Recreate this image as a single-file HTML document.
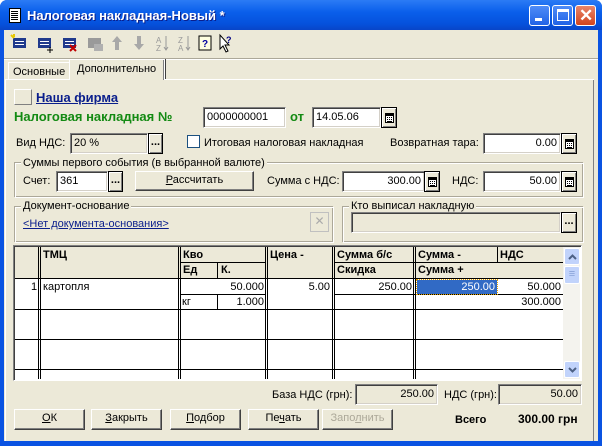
<!DOCTYPE html>
<html><head><meta charset="utf-8">
<style>
*{margin:0;padding:0;box-sizing:border-box}
body{width:602px;height:446px;overflow:hidden;background:#fff;font-family:"Liberation Sans",Tahoma,sans-serif;font-size:11px;color:#000;position:relative}
.a{position:absolute}
.win{left:0;top:0;width:602px;height:446px;background:#0A53E2;border-radius:7px 7px 0 0}
.title{left:0;top:0;width:602px;height:30px;background:linear-gradient(#2B7BF5,#0A5FEB 40%,#0551DC 80%,#0845C8);border-radius:7px 7px 0 0}
.body{left:4px;top:30px;width:594px;height:411px;background:#ECE9D8}
.t{position:absolute;white-space:nowrap;line-height:13px}
.in{position:absolute;background:#fff;border:1px solid;border-color:#808080 #fff #fff #808080;box-shadow:inset 1px 1px #404040,inset -1px -1px #D4D0C8;padding:3px 3px 0;line-height:13px;white-space:nowrap}
.r{text-align:right;padding-right:3px}
.btn{position:absolute;background:#ECE9D8;border:1px solid;border-color:#fff #404040 #404040 #fff;box-shadow:inset -1px -1px #808080;text-align:center;line-height:17px}
.sb{position:absolute;background:#ECE9D8;border:1px solid #000;box-shadow:inset 1px 1px #fff,inset -1px -1px #808080;text-align:center;font-weight:bold;line-height:10px;font-size:11px}
.sb svg{position:absolute;left:3px;top:5px}
.grp{position:absolute;border:1px solid #fff;box-shadow:-1px -1px 0 #ACA899 inset,-1px -1px 0 #ACA899}
.gl{position:absolute;background:#ECE9D8;padding:0 2px;line-height:13px;white-space:nowrap}
.vl{position:absolute;width:1px;background:#000}
.hl{position:absolute;height:1px;background:#000}
.wb{position:absolute;top:5px;width:21px;height:21px;border:1px solid #fff;border-radius:3px;background:linear-gradient(#4F8CF7,#2163E6)}
</style></head><body>
<svg width="0" height="0" style="position:absolute"><defs><symbol id="calc" viewBox="0 0 9 10"><rect x="0.5" y="0.5" width="8" height="9" fill="#fff" stroke="#000"/><rect x="1" y="1" width="7" height="2" fill="#000"/><g fill="#000"><rect x="2" y="4" width="1" height="1"/><rect x="4" y="4" width="1" height="1"/><rect x="6" y="4" width="1" height="1"/><rect x="2" y="6" width="1" height="1"/><rect x="4" y="6" width="1" height="1"/><rect x="6" y="6" width="1" height="1"/><rect x="2" y="8" width="5" height="1"/></g></symbol></defs></svg>
<div class="a win"></div>
<div class="a title"></div>
<div class="a" style="left:9px;top:8px;width:12px;height:15px;background:#fff;border:1px solid #000"></div>
<div class="a" style="left:11px;top:11px;width:7px;height:1px;background:#000;box-shadow:0 2px #000,0 4px #000,0 6px #000,0 8px #000"></div>
<div class="t" style="left:27px;top:8px;color:#fff;font-weight:bold;font-size:13px;line-height:15px;text-shadow:1px 1px #0A1E8C">Налоговая накладная-Новый *</div>
<div class="wb" style="left:529px"><div class="a" style="left:5px;top:12px;width:7px;height:3px;background:#fff"></div></div>
<div class="wb" style="left:552px"><div class="a" style="left:4px;top:3px;width:12px;height:12px;border:1px solid #fff;border-top-width:3px"></div></div>
<div class="wb" style="left:575px;background:linear-gradient(#E8856A,#D2451E)"><div class="t" style="left:3px;top:1px;color:#fff;font-size:17px;line-height:17px;font-weight:bold">✕</div></div>
<div class="a body"></div>
<svg class="a" style="left:8px;top:32px" width="230" height="22">
<g fill="#203A8C"><rect x="5" y="6" width="13" height="10"/><rect x="30" y="6" width="13" height="10"/><rect x="55" y="6" width="13" height="10"/></g>
<g fill="#fff"><rect x="7" y="9" width="9" height="1"/><rect x="7" y="12" width="9" height="1"/><rect x="32" y="9" width="9" height="1"/><rect x="32" y="12" width="9" height="1"/><rect x="57" y="9" width="9" height="1"/><rect x="57" y="12" width="9" height="1"/></g>
<path d="M3 3l3 3M6 2v3" stroke="#E8C800" stroke-width="2"/>
<path d="M42 15v6M39 18h6" stroke="#000"/>
<path d="M62 13l6 6M68 13l-6 6" stroke="#C00000" stroke-width="2"/>
<rect x="80" y="6" width="13" height="10" fill="#9A9A9A"/><rect x="86" y="12" width="9" height="7" fill="#B0B0B0"/>
<path d="M109 4l-5 6h3v8h4v-8h3z" fill="#A8A8A8"/>
<path d="M131 18l-5-6h3v-8h4v8h3z" fill="#A8A8A8"/>
<text x="148" y="11" font-size="8" fill="#999" font-family="Liberation Sans">A</text><text x="148" y="19" font-size="8" fill="#999" font-family="Liberation Sans">Z</text>
<text x="170" y="11" font-size="8" fill="#999" font-family="Liberation Sans">Z</text><text x="170" y="19" font-size="8" fill="#999" font-family="Liberation Sans">A</text>
<path d="M158 4v14M156 15l2 3 2-3M180 4v14M178 15l2 3 2-3" stroke="#999" fill="none"/>
<rect x="191" y="4" width="12" height="14" fill="#FFFFE0" stroke="#000"/><text x="194" y="15" font-size="10" font-weight="bold" fill="#0000A0" font-family="Liberation Sans">?</text>
<path d="M212 3v14l3-3 3 6 2-1-3-6h4z" fill="#fff" stroke="#000"/><text x="218" y="11" font-size="9" font-weight="bold" fill="#000080" font-family="Liberation Sans">?</text>
</svg>
<div class="hl" style="left:4px;top:58px;width:594px;background:#ACA899"></div>
<div class="hl" style="left:4px;top:59px;width:594px;background:#fff"></div>
<div class="a" style="left:8px;top:62px;width:63px;height:17px;border:1px solid #fff;border-bottom:none;box-shadow:inset -1px 0 #ACA899"></div>
<div class="t" style="left:13px;top:66px">Основные</div>
<div class="a" style="left:69px;top:59px;width:96px;height:21px;background:#ECE9D8;border:1px solid #fff;border-bottom:none;box-shadow:inset -1px 0 #808080,1px 0 #404040"></div>
<div class="t" style="left:77px;top:63px">Дополнительно</div>
<div class="a" style="left:5px;top:79px;width:589px;height:362px;border-left:1px solid #fff;border-right:1px solid #808080"></div>
<div class="hl" style="left:5px;top:79px;width:64px;background:#fff"></div>
<div class="hl" style="left:165px;top:79px;width:429px;background:#fff"></div>
<div class="a" style="left:14px;top:89px;width:18px;height:16px;border:1px solid;border-color:#fff #808080 #808080 #fff;background:#ECE9D8"></div>
<div class="t" style="left:36px;top:90px;font-size:13px;font-weight:bold;color:#0A1E8C;text-decoration:underline;line-height:15px">Наша фирма</div>
<div class="t" style="left:14px;top:109px;font-size:13px;font-weight:bold;color:#138A13;line-height:15px">Налоговая накладная №</div>
<div class="in" style="left:203px;top:107px;width:83px;height:21px">0000000001</div>
<div class="t" style="left:290px;top:109px;font-size:13px;font-weight:bold;color:#138A13;line-height:15px">от</div>
<div class="in" style="left:312px;top:107px;width:69px;height:21px">14.05.06</div>
<div class="sb" style="left:381px;top:107px;width:16px;height:21px"><svg width="9" height="10"><use href="#calc"/></svg></div>
<div class="t" style="left:16px;top:137px">Вид НДС:</div>
<div class="in" style="left:70px;top:133px;width:78px;height:21px;background:#ECE9D8">20 %</div>
<div class="sb" style="left:148px;top:133px;width:15px;height:21px;line-height:17px">...</div>
<div class="a" style="left:187px;top:135px;width:13px;height:13px;background:#fff;border:1px solid #1C5180"></div>
<div class="t" style="left:204px;top:137px">Итоговая налоговая накладная</div>
<div class="t" style="left:390px;top:137px">Возвратная тара:</div>
<div class="in r" style="left:483px;top:133px;width:78px;height:21px">0.00</div>
<div class="sb" style="left:561px;top:133px;width:16px;height:21px"><svg width="9" height="10"><use href="#calc"/></svg></div>
<div class="grp" style="left:15px;top:163px;width:569px;height:35px"></div>
<div class="gl" style="left:21px;top:157px">Суммы первого события (в выбранной валюте)</div>
<div class="t" style="left:23px;top:175px">Счет:</div>
<div class="in" style="left:56px;top:171px;width:52px;height:21px">361</div>
<div class="sb" style="left:108px;top:171px;width:15px;height:21px;line-height:17px">...</div>
<div class="btn" style="left:135px;top:171px;width:119px;height:20px"><u>Р</u>ассчитать</div>
<div class="t" style="left:267px;top:175px">Сумма с НДС:</div>
<div class="in r" style="left:342px;top:171px;width:83px;height:21px">300.00</div>
<div class="sb" style="left:424px;top:171px;width:16px;height:21px"><svg width="9" height="10"><use href="#calc"/></svg></div>
<div class="t" style="left:452px;top:175px">НДС:</div>
<div class="in r" style="left:483px;top:171px;width:78px;height:21px">50.00</div>
<div class="sb" style="left:561px;top:171px;width:16px;height:21px"><svg width="9" height="10"><use href="#calc"/></svg></div>
<div class="grp" style="left:15px;top:207px;width:319px;height:36px"></div>
<div class="gl" style="left:21px;top:200px">Документ-основание</div>
<div class="t" style="left:23px;top:218px;color:#0A1E8C;text-decoration:underline">&lt;Нет документа-основания&gt;</div>
<div class="a" style="left:310px;top:212px;width:19px;height:20px;border:1px solid #C0C0C0;color:#aaa;text-align:center;line-height:17px;font-size:12px">✕</div>
<div class="grp" style="left:343px;top:207px;width:241px;height:36px"></div>
<div class="gl" style="left:349px;top:200px">Кто выписал накладную</div>
<div class="in" style="left:351px;top:212px;width:210px;height:21px;background:#ECE9D8"></div>
<div class="sb" style="left:561px;top:212px;width:16px;height:21px;line-height:17px">...</div>
<div class="a" style="left:13px;top:245px;width:569px;height:136px;background:#fff;border:1px solid;border-color:#808080 #fff #fff #808080;box-shadow:inset 1px 1px #404040"></div>
<div class="a" style="left:15px;top:247px;width:548px;height:31px;background:#ECE9D8"></div>
<div class="hl" style="left:15px;top:278px;width:548px"></div>
<div class="hl" style="left:180px;top:262px;width:86px"></div>
<div class="hl" style="left:334px;top:262px;width:229px"></div>
<div class="hl" style="left:180px;top:294px;width:86px"></div>
<div class="hl" style="left:334px;top:294px;width:229px"></div>
<div class="hl" style="left:15px;top:309px;width:548px"></div>
<div class="hl" style="left:15px;top:339px;width:548px"></div>
<div class="hl" style="left:15px;top:369px;width:548px"></div>
<div class="vl" style="left:38px;top:247px;height:132px"></div><div class="vl" style="left:40px;top:247px;height:132px"></div>
<div class="vl" style="left:178px;top:247px;height:132px"></div><div class="vl" style="left:180px;top:247px;height:132px"></div>
<div class="vl" style="left:265px;top:247px;height:132px"></div><div class="vl" style="left:267px;top:247px;height:132px"></div>
<div class="vl" style="left:332px;top:247px;height:132px"></div><div class="vl" style="left:334px;top:247px;height:132px"></div>
<div class="vl" style="left:413px;top:247px;height:132px"></div><div class="vl" style="left:415px;top:247px;height:132px"></div>
<div class="vl" style="left:217px;top:262px;height:16px"></div>
<div class="vl" style="left:217px;top:294px;height:15px"></div>
<div class="vl" style="left:497px;top:247px;height:16px"></div>
<div class="t" style="left:43px;top:249px;font-weight:bold">ТМЦ</div>
<div class="t" style="left:183px;top:249px;font-weight:bold">Кво</div>
<div class="t" style="left:183px;top:264px;font-weight:bold">Ед</div>
<div class="t" style="left:221px;top:264px;font-weight:bold">К.</div>
<div class="t" style="left:270px;top:249px;font-weight:bold">Цена -</div>
<div class="t" style="left:337px;top:249px;font-weight:bold">Сумма б/с</div>
<div class="t" style="left:337px;top:264px;font-weight:bold">Скидка</div>
<div class="t" style="left:418px;top:249px;font-weight:bold">Сумма -</div>
<div class="t" style="left:500px;top:249px;font-weight:bold">НДС</div>
<div class="t" style="left:418px;top:264px;font-weight:bold">Сумма +</div>
<div class="t" style="left:31px;top:281px">1</div>
<div class="t" style="left:43px;top:281px">картопля</div>
<div class="t" style="left:182px;top:281px;width:82px;text-align:right">50.000</div>
<div class="t" style="left:182px;top:296px">кг</div>
<div class="t" style="left:219px;top:296px;width:45px;text-align:right">1.000</div>
<div class="t" style="left:268px;top:281px;width:62px;text-align:right">5.00</div>
<div class="t" style="left:336px;top:281px;width:76px;text-align:right">250.00</div>
<div class="a" style="left:417px;top:280px;width:80px;height:14px;background:#316AC5;outline:1px dotted #E0A000"></div>
<div class="t" style="left:417px;top:281px;width:78px;text-align:right;color:#fff">250.00</div>
<div class="t" style="left:497px;top:281px;width:64px;text-align:right">50.000</div>
<div class="t" style="left:497px;top:296px;width:64px;text-align:right">300.000</div>
<div class="a" style="left:563px;top:247px;width:17px;height:132px;background:#F4F3EE"></div>
<div class="a" style="left:564px;top:248px;width:16px;height:17px;background:#C1D3FB;border:1px solid #fff;border-radius:2px"><svg class="a" style="left:3px;top:5px" width="9" height="6"><path d="M1 5l3.5-3.5L8 5" stroke="#4D6185" stroke-width="2" fill="none"/></svg></div>
<div class="a" style="left:564px;top:266px;width:16px;height:18px;background:#C1D3FB;border:1px solid #fff;border-radius:2px;color:#8AA3D8;text-align:center;line-height:15px">≡</div>
<div class="a" style="left:564px;top:361px;width:16px;height:17px;background:#C1D3FB;border:1px solid #fff;border-radius:2px"><svg class="a" style="left:3px;top:5px" width="9" height="6"><path d="M1 1l3.5 3.5L8 1" stroke="#4D6185" stroke-width="2" fill="none"/></svg></div>
<div class="t" style="left:272px;top:389px">База НДС (грн):</div>
<div class="in r" style="left:355px;top:384px;width:83px;height:21px;background:#ECE9D8">250.00</div>
<div class="t" style="left:444px;top:389px">НДС (грн):</div>
<div class="in r" style="left:498px;top:384px;width:84px;height:21px;background:#ECE9D8">50.00</div>
<div class="btn" style="left:14px;top:409px;width:71px;height:21px"><u>О</u>К</div>
<div class="btn" style="left:91px;top:409px;width:71px;height:21px"><u>З</u>акрыть</div>
<div class="btn" style="left:170px;top:409px;width:71px;height:21px"><u>П</u>одбор</div>
<div class="btn" style="left:248px;top:409px;width:71px;height:21px">Пе<u>ч</u>ать</div>
<div class="btn" style="left:322px;top:409px;width:71px;height:21px;color:#ACA899">Запо<u>л</u>нить</div>
<div class="t" style="left:455px;top:414px;font-weight:bold">Всего</div>
<div class="t" style="left:518px;top:413px;font-weight:bold;font-size:12px">300.00 грн</div>
</body></html>
